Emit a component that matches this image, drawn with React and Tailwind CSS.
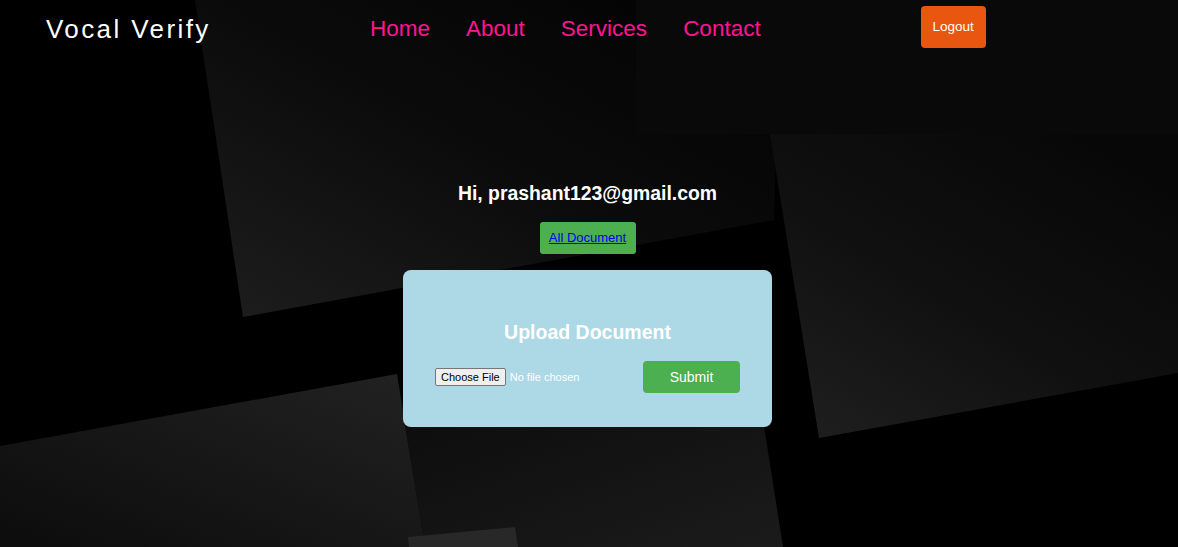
const Background = () => (
  <svg className="absolute inset-0 w-full h-full" viewBox="0 0 1178 547" preserveAspectRatio="none">
    <defs>
      <linearGradient id="ga" x1="1" y1="0" x2="0" y2="1">
        <stop offset="0" stopColor="#020202" />
        <stop offset="0.5" stopColor="#0b0b0b" />
        <stop offset="1" stopColor="#1e1e1e" />
      </linearGradient>
      <linearGradient id="gb" x1="0.8" y1="0" x2="0" y2="1">
        <stop offset="0" stopColor="#070707" />
        <stop offset="0.5" stopColor="#101010" />
        <stop offset="1" stopColor="#202020" />
      </linearGradient>
      <linearGradient id="gc" x1="0" y1="1" x2="1" y2="0">
        <stop offset="0" stopColor="#0c0c0c" />
        <stop offset="1" stopColor="#222222" />
      </linearGradient>
      <linearGradient id="gd" x1="0" y1="0" x2="1" y2="1">
        <stop offset="0" stopColor="#0d0d0d" />
        <stop offset="1" stopColor="#1b1b1b" />
      </linearGradient>
    </defs>
    <rect width="1178" height="547" fill="#000" />
    <polygon points="195,0 780,0 774,220 243,317" fill="url(#ga)" />
    <polygon points="770,134 1178,134 1178,373 819,438" fill="url(#gb)" />
    <rect x="636" y="0" width="542" height="134" fill="#090909" />
    <polygon points="0,446 397,374 425,547 0,547" fill="url(#gc)" />
    <polygon points="404,420 763,420 783,547 425,547" fill="url(#gd)" />
    <polygon points="408,537 515,527 518,547 409,547" fill="#282828" />
  </svg>
);

const App = () => {
  return (
    <div className="relative w-full h-[547px] overflow-hidden bg-black font-['Liberation_Sans',Arial,sans-serif]">
      <Background />
      <div className="relative flex flex-col">
        <nav className="flex items-center h-[54px] pl-[46px]">
          <div className="w-[324px] pt-[3px] text-white text-[26px] tracking-[2.4px] leading-none">Vocal Verify</div>
          <ul className="flex gap-[36px] pt-[4px] text-[22.5px] text-[#ff1493] leading-none">
            <li><a href="#">Home</a></li>
            <li><a href="#">About</a></li>
            <li><a href="#">Services</a></li>
            <li><a href="#">Contact</a></li>
          </ul>
          <button className="ml-[160px] w-[65px] h-[42px] rounded-[4px] bg-[#e8560f] text-white text-[13.5px]">Logout</button>
        </nav>

        <main className="flex flex-col items-center pt-[126px] pr-[3px]">
          <h1 className="text-white font-bold text-[19.4px] leading-[26px]">Hi, prashant123@gmail.com</h1>
          <div className="mt-[16px] flex items-center justify-center w-[96px] h-[32px] bg-[#4caf50] rounded-[3px]">
            <a href="#" className="text-[#0000ee] underline text-[13px]">All Document</a>
          </div>
          <div className="mt-[16px] w-[369px] h-[157px] bg-[#add8e6] rounded-[8px] flex flex-col px-[32px] pt-[50px]">
            <h2 className="text-center text-white font-bold text-[19.5px] leading-[24px]">Upload Document</h2>
            <div className="mt-[17px] flex items-center justify-between">
              <input
                type="file"
                className="min-w-0 text-white text-[11px] file:mr-[4px] file:bg-[#efefef] file:text-black file:border file:border-[#767676] file:rounded-[2px] file:px-[5px] file:h-[18px] file:text-[11px]"
              />
              <button className="shrink-0 w-[97px] h-[32px] rounded-[4px] bg-[#4caf50] text-white text-[14px]">Submit</button>
            </div>
          </div>
        </main>
      </div>
    </div>
  );
};

export default App;
